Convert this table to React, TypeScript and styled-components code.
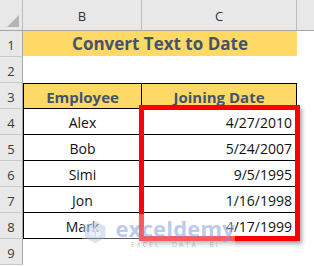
import React from 'react';
import styled, { createGlobalStyle } from 'styled-components';

const GlobalStyle = createGlobalStyle`
  html, body { margin: 0; padding: 0; background: #fff; }
  body { font-family: "Open Sans", "Liberation Sans", sans-serif; }
`;

const COLS = '23px 119px 155px 1fr';

const Sheet = styled.div`
  position: relative;
  width: 314px;
  height: 266px;
  overflow: hidden;
  background: #fff;
`;

const HeaderRow = styled.div`
  display: grid;
  grid-template-columns: ${COLS};
  height: 31px;
  box-sizing: border-box;
  background: #e8e8e8;
  border-bottom: 1px solid #a6a6a6;
`;

const Corner = styled.div`
  position: relative;
  border-right: 1px solid #bdbdbd;
  &::after {
    content: '';
    position: absolute;
    right: 3px;
    bottom: 3px;
    width: 0;
    height: 0;
    border-left: 12px solid transparent;
    border-bottom: 12px solid #b4b4b4;
  }
`;

const ColLetter = styled.div`
  display: flex;
  align-items: center;
  justify-content: center;
  padding-top: 2px;
  font-size: 13px;
  color: #333;
  border-right: 1px solid #bdbdbd;
  &:last-child { border-right: none; }
`;

const Row = styled.div`
  display: grid;
  grid-template-columns: ${COLS};
  height: 26px;
`;

const RowNum = styled.div`
  display: flex;
  align-items: center;
  justify-content: center;
  box-sizing: border-box;
  padding-top: 3px;
  background: #e8e8e8;
  border-right: 1px solid #a6a6a6;
  border-bottom: 1px solid #c8c8c8;
  font-size: 13px;
  color: #3a3a3a;
`;

const Title = styled.div`
  grid-column: 2 / 4;
  background: #ffd966;
  display: flex;
  align-items: center;
  justify-content: center;
  margin-bottom: 1px;
  font-size: 17px;
  font-weight: 700;
  color: #44546a;
`;

const Cell = styled.div<{ $head?: boolean; $right?: boolean; $first?: boolean; $left?: boolean }>`
  box-sizing: border-box;
  display: flex;
  align-items: center;
  justify-content: ${p => (p.$right ? 'flex-end' : 'center')};
  padding: 2px 4px 0 4px;
  background: ${p => (p.$head ? '#ffd966' : '#fff')};
  border-bottom: 1px solid #000;
  border-top: ${p => (p.$first ? '1px solid #000' : 'none')};
  border-left: ${p => (p.$left ? '1px solid #000' : 'none')};
  border-right: 1px solid #000;
  font-size: ${p => (p.$head ? '15px' : '14px')};
  font-weight: ${p => (p.$head ? 700 : 400)};
  color: ${p => (p.$head ? '#44546a' : '#111')};
`;

const Highlight = styled.div`
  position: absolute;
  left: 139px;
  top: 105px;
  width: 161px;
  height: 136px;
  box-sizing: border-box;
  border: 5px solid #ff0000;
  box-shadow: 2px 3px 4px rgba(0, 0, 0, 0.35);
  pointer-events: none;
`;

const Watermark = styled.div`
  position: absolute;
  left: 82px;
  top: 214px;
  width: 153px;
  height: 36px;
  display: flex;
  align-items: center;
  gap: 9px;
  padding-left: 2px;
  box-sizing: border-box;
  background: rgba(255, 255, 255, 0.35);
  pointer-events: none;
`;

const WmText = styled.div`
  display: flex;
  flex-direction: column;
  align-items: center;
  line-height: 1;
`;

const WmBrand = styled.span`
  font-size: 22px;
  font-weight: 700;
  color: rgba(120, 150, 215, 0.5);
  letter-spacing: 0.2px;
`;

const WmTag = styled.span`
  font-size: 7px;
  letter-spacing: 2px;
  color: rgba(140, 140, 140, 0.55);
  margin-top: 2px;
`;

const rows = [
  ['Alex', '4/27/2010'],
  ['Bob', '5/24/2007'],
  ['Simi', '9/5/1995'],
  ['Jon', '1/16/1998'],
  ['Mark', '4/17/1999'],
];

export default function App() {
  return (
    <>
      <GlobalStyle />
      <Sheet>
        <HeaderRow>
          <Corner />
          <ColLetter>B</ColLetter>
          <ColLetter>C</ColLetter>
          <ColLetter />
        </HeaderRow>
        <Row>
          <RowNum>1</RowNum>
          <Title>Convert Text to Date</Title>
        </Row>
        <Row>
          <RowNum>2</RowNum>
        </Row>
        <Row>
          <RowNum>3</RowNum>
          <Cell $head $first $left>Employee</Cell>
          <Cell $head $first>Joining Date</Cell>
        </Row>
        {rows.map(([name, date], i) => (
          <Row key={name}>
            <RowNum>{i + 4}</RowNum>
            <Cell $left>{name}</Cell>
            <Cell $right>{date}</Cell>
          </Row>
        ))}
        <Row>
          <RowNum>9</RowNum>
        </Row>
        <Highlight />
        <Watermark>
          <svg width="24" height="26" viewBox="0 0 24 26">
            <path d="M12 1 L23 7 L23 19 L12 25 L1 19 L1 7 Z" fill="rgba(150,170,215,0.35)" />
            <path d="M12 7 L18 10.5 L18 16 L12 19.5 L6 16 L6 10.5 Z" fill="rgba(255,255,255,0.5)" />
            <path d="M12 13 L18 10.5 M12 13 L12 19.5 M12 13 L6 10.5" stroke="rgba(150,170,215,0.45)" strokeWidth="1" />
          </svg>
          <WmText>
            <WmBrand>exceldemy</WmBrand>
            <WmTag>EXCEL · DATA · BI</WmTag>
          </WmText>
        </Watermark>
      </Sheet>
    </>
  );
}
